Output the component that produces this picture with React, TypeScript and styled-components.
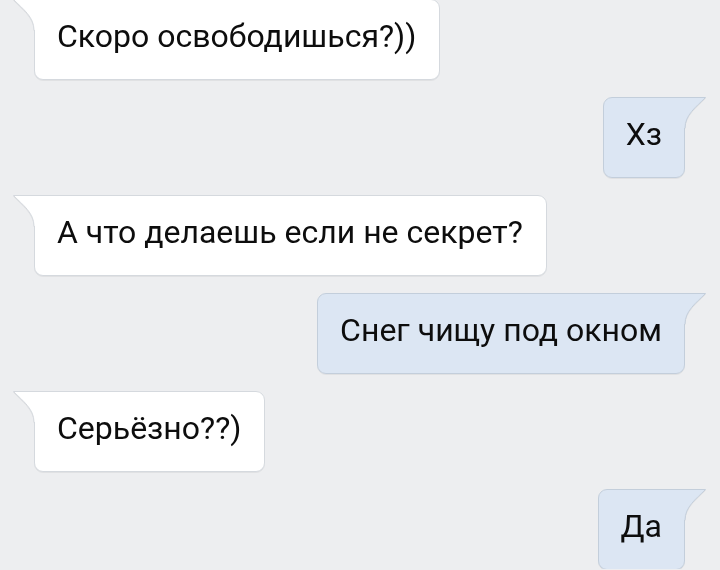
import React from "react";
import styled, { createGlobalStyle } from "styled-components";

const Global = createGlobalStyle`
  html, body { margin: 0; padding: 0; background: #edeef0; }
  body { font-family: Roboto, "Noto Sans", sans-serif; overflow: hidden; }
`;

const Page = styled.div`
  width: 720px;
  height: 570px;
  background: #edeef0;
  display: flex;
  flex-direction: column;
  gap: 17px;
  margin-top: -1px;
  overflow: hidden;
`;

const Row = styled.div<{ $out?: boolean }>`
  display: flex;
  justify-content: ${(p) => (p.$out ? "flex-end" : "flex-start")};
  padding: ${(p) => (p.$out ? "0 14px 0 0" : "0 0 0 13px")};
`;

const Bubble = styled.div<{ $out?: boolean }>`
  display: flex;
  flex-direction: ${(p) => (p.$out ? "row-reverse" : "row")};
  align-items: flex-start;
  filter: drop-shadow(0 1px 0 rgba(0, 0, 0, 0.05));
`;

const TailSvg = styled.svg`
  position: relative;
  z-index: 2;
  flex: none;
  display: block;
`;

const Body = styled.div<{ $out?: boolean }>`
  background: ${(p) => (p.$out ? "#dce6f3" : "#ffffff")};
  border: 1px solid ${(p) => (p.$out ? "#c3cedb" : "#d5d9de")};
  border-radius: ${(p) => (p.$out ? "9px 0 9px 9px" : "0 9px 9px 9px")};
  padding: ${(p) => (p.$out ? "18px 22px 25px 22px" : "18px 23px 25px 22px")};
  font-size: 32px;
  line-height: 36px;
  color: #0d0d0d;
  white-space: nowrap;
`;

const Tail: React.FC<{ out?: boolean }> = ({ out }) => {
  const fill = out ? "#dce6f3" : "#ffffff";
  const stroke = out ? "#c3cedb" : "#d5d9de";
  const w = 22;
  const path = out
    ? `M0,0.5 L${w - 0.5},0.5 C${w - 10},10 1,18 1,31 L0,31 Z`
    : `M${w},0.5 L0.5,0.5 C10,10 ${w - 1},18 ${w - 1},31 L${w},31 Z`;
  const line = out
    ? `M0,0.5 L${w - 0.5},0.5 C${w - 10},10 1,18 1,31`
    : `M${w},0.5 L0.5,0.5 C10,10 ${w - 1},18 ${w - 1},31`;
  return (
    <TailSvg
      width={w}
      height={31}
      viewBox={`0 0 ${w} 31`}
      style={out ? { marginLeft: -1 } : { marginRight: -1 }}
    >
      <path d={path} fill={fill} />
      <path d={line} fill="none" stroke={stroke} strokeWidth={1} />
    </TailSvg>
  );
};

const messages: { text: string; out: boolean }[] = [
  { text: "Скоро освободишься?))", out: false },
  { text: "Хз", out: true },
  { text: "А что делаешь если не секрет?", out: false },
  { text: "Снег чищу под окном", out: true },
  { text: "Серьёзно??)", out: false },
  { text: "Да", out: true },
];

export default function App() {
  return (
    <>
      <Global />
      <Page>
        {messages.map((m, i) => (
          <Row key={i} $out={m.out}>
            <Bubble $out={m.out}>
              <Tail out={m.out} />
              <Body $out={m.out}>{m.text}</Body>
            </Bubble>
          </Row>
        ))}
      </Page>
    </>
  );
}
